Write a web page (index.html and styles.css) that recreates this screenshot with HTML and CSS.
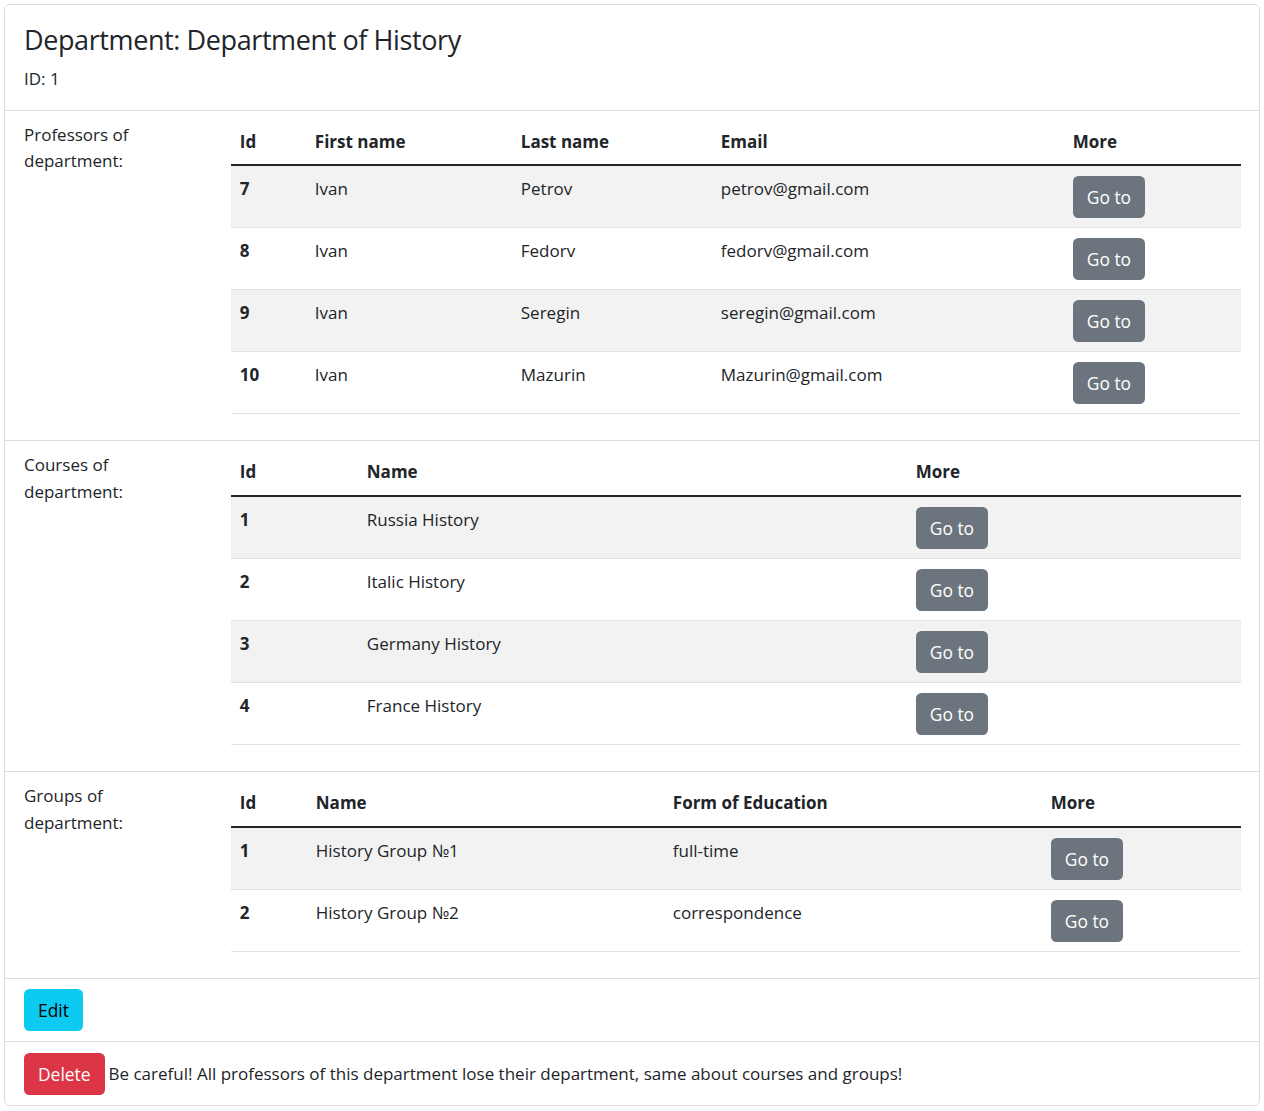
FILE: index.html
```html
<!DOCTYPE html>
<html lang="en">
<head>
<meta charset="utf-8">
<title>Department of History</title>
<link rel="stylesheet" href="styles.css">
</head>
<body>
<div class="card">
  <div class="card-body">
    <h3 class="title">Department: Department of History</h3>
    <p class="id">ID: 1</p>
  </div>
  <ul class="list">
    <li class="list-item">
      <div class="row">
        <div class="label">Professors of department:</div>
        <div class="content">
          <table class="table">
            <colgroup><col class="w75"><col class="w206"><col class="w200"><col class="w352"><col></colgroup>
            <thead><tr><th>Id</th><th>First name</th><th>Last name</th><th>Email</th><th>More</th></tr></thead>
            <tbody>
              <tr><th>7</th><td>Ivan</td><td>Petrov</td><td>petrov@gmail.com</td><td><a class="btn btn-secondary">Go to</a></td></tr>
              <tr><th>8</th><td>Ivan</td><td>Fedorv</td><td>fedorv@gmail.com</td><td><a class="btn btn-secondary">Go to</a></td></tr>
              <tr><th>9</th><td>Ivan</td><td>Seregin</td><td>seregin@gmail.com</td><td><a class="btn btn-secondary">Go to</a></td></tr>
              <tr><th>10</th><td>Ivan</td><td>Mazurin</td><td>Mazurin@gmail.com</td><td><a class="btn btn-secondary">Go to</a></td></tr>
            </tbody>
          </table>
        </div>
      </div>
    </li>
    <li class="list-item">
      <div class="row">
        <div class="label">Courses of department:</div>
        <div class="content">
          <table class="table">
            <colgroup><col class="w127"><col class="w549"><col></colgroup>
            <thead><tr><th>Id</th><th>Name</th><th>More</th></tr></thead>
            <tbody>
              <tr><th>1</th><td>Russia History</td><td><a class="btn btn-secondary">Go to</a></td></tr>
              <tr><th>2</th><td>Italic History</td><td><a class="btn btn-secondary">Go to</a></td></tr>
              <tr><th>3</th><td>Germany History</td><td><a class="btn btn-secondary">Go to</a></td></tr>
              <tr><th>4</th><td>France History</td><td><a class="btn btn-secondary">Go to</a></td></tr>
            </tbody>
          </table>
        </div>
      </div>
    </li>
    <li class="list-item">
      <div class="row">
        <div class="label">Groups of department:</div>
        <div class="content">
          <table class="table">
            <colgroup><col class="w76"><col class="w357"><col class="w378"><col></colgroup>
            <thead><tr><th>Id</th><th>Name</th><th>Form of Education</th><th>More</th></tr></thead>
            <tbody>
              <tr><th>1</th><td>History Group №1</td><td>full-time</td><td><a class="btn btn-secondary">Go to</a></td></tr>
              <tr><th>2</th><td>History Group №2</td><td>correspondence</td><td><a class="btn btn-secondary">Go to</a></td></tr>
            </tbody>
          </table>
        </div>
      </div>
    </li>
  </ul>
  <ul class="list list-actions">
    <li class="list-item action-item"><a class="btn btn-info">Edit</a></li>
    <li class="list-item action-item"><a class="btn btn-danger">Delete</a><span class="warning">Be careful! All professors of this department lose their department, same about courses and groups!</span></li>
  </ul>
</div>
</body>
</html>
```
FILE: styles.css
```css
html, body {
  margin: 0;
  padding: 0;
}
body {
  margin: 4px;
  font-family: "Open Sans", "Noto Sans", sans-serif;
  font-size: 17px;
  line-height: 26.4px;
  color: #212529;
  background: #fff;
}
.card {
  border: 1px solid #dcdcdc;
  border-radius: 6px;
  overflow: hidden;
}
.card-body {
  padding: 18px 18px 17.6px 19px;
}
.title {
  margin: 0 0 9px;
  font-size: 27px;
  font-weight: 500;
  line-height: 33.6px;
  letter-spacing: -0.4px;
}
.id {
  margin: 0;
}
.list {
  list-style: none;
  margin: 0;
  padding: 0;
}
.list-item {
  border-top: 1px solid #dcdcdc;
  padding: 8px 17.6px 8.8px 19px;
}
.row {
  display: grid;
  grid-template-columns: 207px 1fr;
}
.label {
  padding-top: 3px;
  padding-right: 40px;
}
.table {
  width: 100%;
  table-layout: fixed;
  border-collapse: collapse;
  margin-bottom: 17.6px;
}
.table th, .table td {
  text-align: left;
  vertical-align: top;
  padding: 10px 8.8px 9px;
}
.table thead th {
  font-weight: 700;
  border-bottom: 2px solid #212529;
}
.table tbody th {
  font-weight: 700;
}
.table tbody tr {
  border-bottom: 1px solid #dee2e6;
}
.table tbody tr:nth-child(odd) {
  background: #f2f2f2;
}
.w75 { width: 75px; }
.w76 { width: 76px; }
.w127 { width: 127px; }
.w200 { width: 200px; }
.w206 { width: 206px; }
.w352 { width: 352px; }
.w357 { width: 357px; }
.w378 { width: 378px; }
.w549 { width: 549px; }
.btn {
  display: inline-block;
  vertical-align: top;
  padding: 7px 13px;
  border: 1px solid transparent;
  border-radius: 5.5px;
  font-size: 17.4px;
  line-height: 26px;
  text-decoration: none;
  cursor: pointer;
}
.btn-secondary {
  background: #6c757d;
  color: #fff;
}
.btn-info {
  background: #0dcaf0;
  color: #000;
}
.btn-danger {
  background: #dc3545;
  color: #fff;
}
.list-actions {
  border-top: 1px solid #dcdcdc;
}
.list-actions .list-item:first-child {
  border-top: none;
}
.action-item {
  display: flex;
  align-items: center;
  padding-top: 10.5px;
  padding-bottom: 10px;
}
.warning {
  margin-left: 4px;
}
```
